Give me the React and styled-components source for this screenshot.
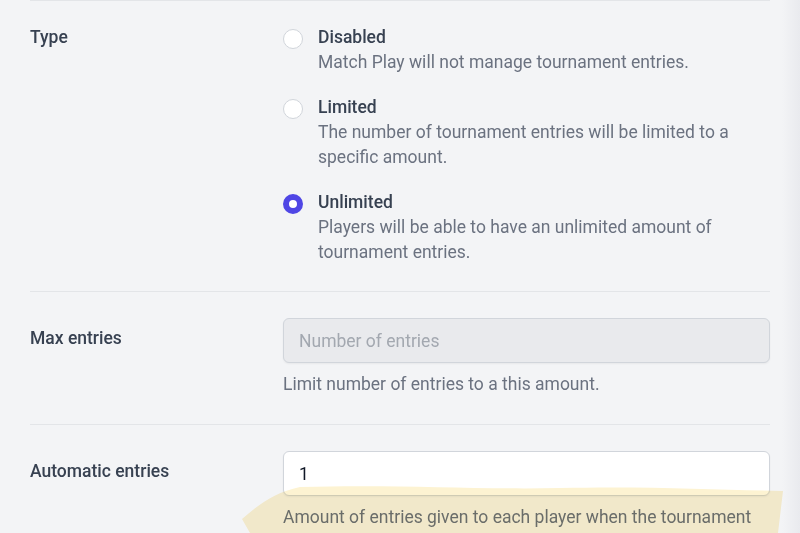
import React from "react";
import styled, { createGlobalStyle } from "styled-components";

const GlobalStyle = createGlobalStyle`
    body {
        margin: 0;
        font-family: Roboto, "Liberation Sans", sans-serif;
        background: linear-gradient(to right, #f3f4f6 calc(100% - 18px), #e9eaee 100%);
    }
`;

const typeOptions = [
    {
        value: "disabled",
        title: "Disabled",
        description: "Match Play will not manage tournament entries.",
    },
    {
        value: "limited",
        title: "Limited",
        description:
            "The number of tournament entries will be limited to a specific amount.",
    },
    {
        value: "unlimited",
        title: "Unlimited",
        description:
            "Players will be able to have an unlimited amount of tournament entries.",
    },
];

const App = () => {
    return (
        <>
            <GlobalStyle />
            <Page>
                <Section $first>
                    <Label>Type</Label>
                    <RadioList>
                        {typeOptions.map((opt) => (
                            <RadioOption key={opt.value}>
                                <Radio
                                    type="radio"
                                    name="type"
                                    value={opt.value}
                                    defaultChecked={opt.value === "unlimited"}
                                />
                                <RadioText>
                                    <RadioTitle>{opt.title}</RadioTitle>
                                    <RadioDescription>
                                        {opt.description}
                                    </RadioDescription>
                                </RadioText>
                            </RadioOption>
                        ))}
                    </RadioList>
                </Section>
                <Section>
                    <Label $offset="8px">Max entries</Label>
                    <Field>
                        <TextInput
                            type="text"
                            placeholder="Number of entries"
                            disabled
                        />
                        <Help>Limit number of entries to a this amount.</Help>
                    </Field>
                </Section>
                <Section>
                    <Label $offset="8px">Automatic entries</Label>
                    <Field>
                        <TextInput type="text" defaultValue="1" />
                        <Help>
                            Amount of entries given to each player when the
                            tournament starts.
                        </Help>
                    </Field>
                </Section>
                <Highlight viewBox="0 0 800 533" preserveAspectRatio="none">
                    <path d="M242 519 C 258 505, 275 492, 300 487 C 400 484, 480 490, 560 488 C 650 486, 720 490, 783 491 L 778 533 L 250 533 Z" />
                </Highlight>
            </Page>
        </>
    );
};

const Page = styled.div`
    position: relative;
    height: 533px;
    overflow: hidden;
    padding: 0 30px;
`;

const Section = styled.div`
    display: grid;
    grid-template-columns: 253px 1fr;
    padding: ${(p) => (p.$first ? "24px 0 26px" : "26px 0 27px")};
    border-top: 1px solid #e3e5e8;
`;

const Label = styled.div`
    padding-top: ${(p) => p.$offset || "0"};
    font-size: 17.5px;
    line-height: 25px;
    font-weight: 500;
    color: #374151;
`;

const RadioList = styled.div`
    display: flex;
    flex-direction: column;
    gap: 20px;
`;

const RadioOption = styled.label`
    display: flex;
    align-items: flex-start;
    gap: 15px;
`;

const Radio = styled.input`
    appearance: none;
    flex: none;
    margin: 4px 0 0;
    width: 20px;
    height: 20px;
    border-radius: 50%;
    border: 1px solid #d1d5db;
    background: #fff;
    box-sizing: border-box;

    &:checked {
        border: 6.5px solid #4f46e5;
        background: #fff;
    }
`;

const RadioText = styled.div`
    display: flex;
    flex-direction: column;
    font-size: 17.5px;
    line-height: 25px;
`;

const RadioTitle = styled.span`
    font-weight: 500;
    color: #374151;
`;

const RadioDescription = styled.span`
    color: #6b7280;
`;

const Field = styled.div`
    display: flex;
    flex-direction: column;
`;

const TextInput = styled.input`
    box-sizing: border-box;
    width: 100%;
    height: 45px;
    padding: 0 15px;
    border: 1px solid #d1d5db;
    border-radius: 6px;
    background: #fff;
    box-shadow: 0 1px 2px rgba(0, 0, 0, 0.05);
    font-family: Roboto, "Liberation Sans", sans-serif;
    font-size: 17.5px;
    color: #111827;
    outline: none;

    &::placeholder {
        color: #a3a8b0;
    }

    &:disabled {
        background: #e9eaed;
    }
`;

const Help = styled.p`
    margin: 9px 0 0;
    font-size: 17.5px;
    line-height: 25px;
    color: #6b7280;
`;

const Highlight = styled.svg`
    position: absolute;
    inset: 0;
    width: 100%;
    height: 100%;
    pointer-events: none;
    mix-blend-mode: multiply;

    path {
        fill: #fdf3d2;
    }
`;

export default App;
